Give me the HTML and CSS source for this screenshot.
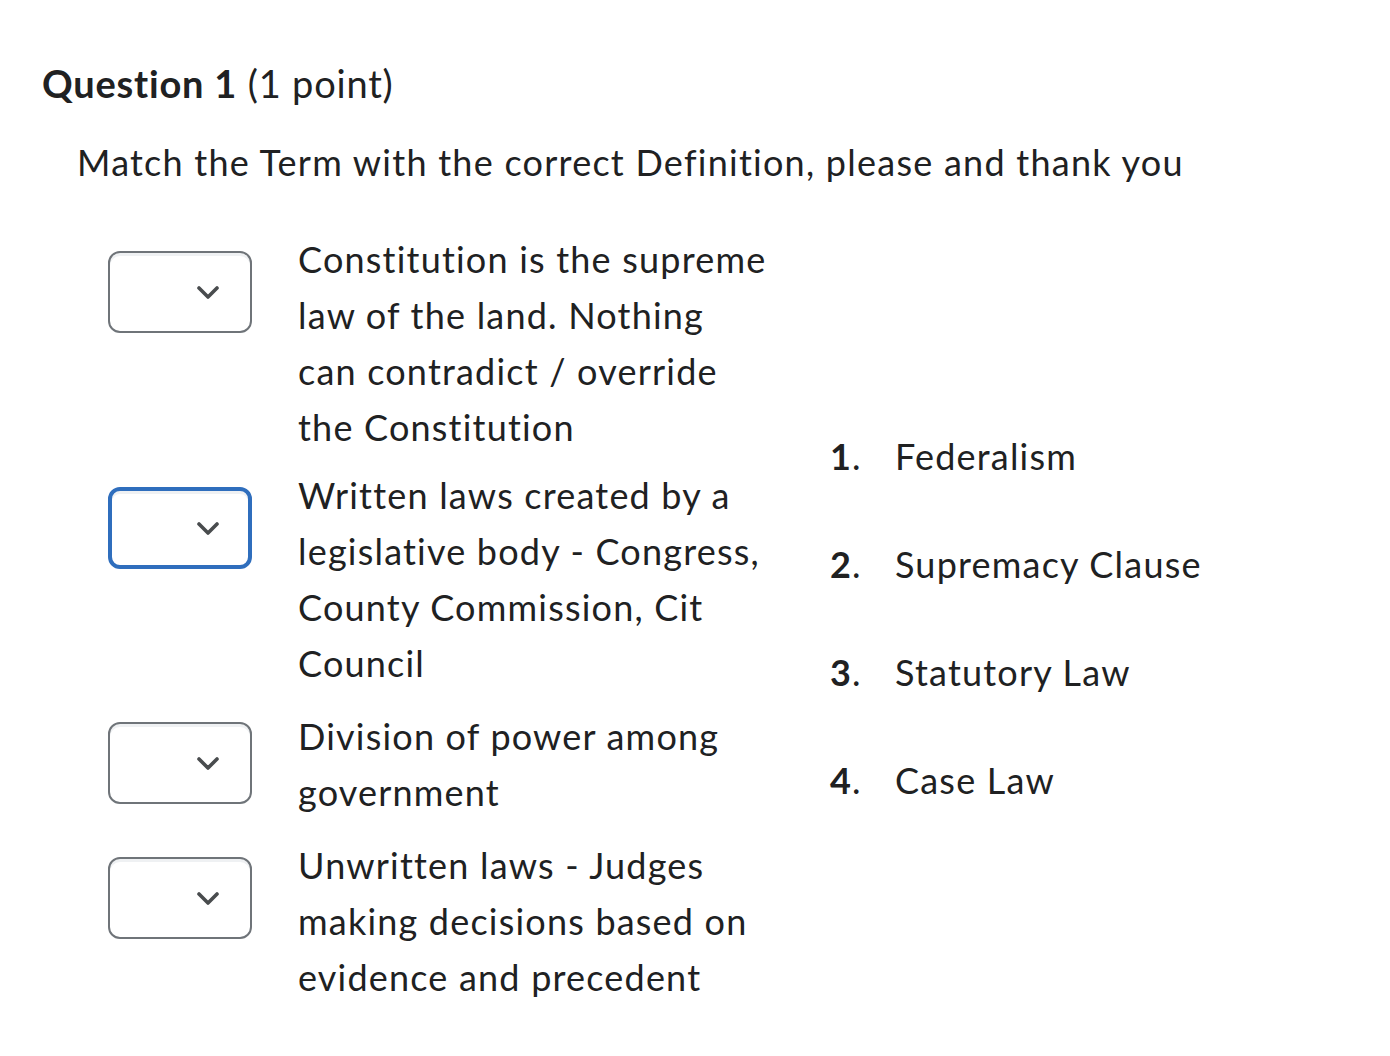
FILE: index.html
```html
<!DOCTYPE html>
<html lang="en">

<head>
    <meta charset="UTF-8">
    <meta name="viewport" content="width=device-width, initial-scale=1.0">
    <title>Question 1</title>
    <link rel="stylesheet" href="styles.css">
</head>

<body>

    <div class="question">
        <h2 class="question-title"><strong>Question 1</strong> (1 point)</h2>
        <p class="question-text">Match the Term with the correct Definition, please and thank you</p>

        <div class="match">
            <div class="definitions">
                <div class="def-row">
                    <div class="dropdown">
                        <svg class="chevron" width="22" height="13" viewBox="0 0 22 13"><path d="M2 2l9 9 9-9" fill="none" stroke="#494c4e" stroke-width="3.6" stroke-linecap="round" stroke-linejoin="round"/></svg>
                    </div>
                    <div class="def-text">Constitution is the supreme law of the land. Nothing can contradict / override the Constitution</div>
                </div>
                <div class="def-row">
                    <div class="dropdown focused">
                        <svg class="chevron" width="22" height="13" viewBox="0 0 22 13"><path d="M2 2l9 9 9-9" fill="none" stroke="#494c4e" stroke-width="3.6" stroke-linecap="round" stroke-linejoin="round"/></svg>
                    </div>
                    <div class="def-text">Written laws created by a legislative body - Congress, County Commission, Cit Council</div>
                </div>
                <div class="def-row short">
                    <div class="dropdown">
                        <svg class="chevron" width="22" height="13" viewBox="0 0 22 13"><path d="M2 2l9 9 9-9" fill="none" stroke="#494c4e" stroke-width="3.6" stroke-linecap="round" stroke-linejoin="round"/></svg>
                    </div>
                    <div class="def-text">Division of power among government</div>
                </div>
                <div class="def-row">
                    <div class="dropdown">
                        <svg class="chevron" width="22" height="13" viewBox="0 0 22 13"><path d="M2 2l9 9 9-9" fill="none" stroke="#494c4e" stroke-width="3.6" stroke-linecap="round" stroke-linejoin="round"/></svg>
                    </div>
                    <div class="def-text">Unwritten laws - Judges making decisions based on evidence and precedent</div>
                </div>
            </div>

            <ol class="terms">
                <li><span class="num"><b>1</b>.</span>Federalism</li>
                <li><span class="num"><b>2</b>.</span>Supremacy Clause</li>
                <li><span class="num"><b>3</b>.</span>Statutory Law</li>
                <li><span class="num"><b>4</b>.</span>Case Law</li>
            </ol>
        </div>
    </div>

</body>

</html>
```

FILE: styles.css
```css
/* Basic styling */
body {
    font-family: 'Lato', 'Noto Sans', sans-serif;
    font-variant-ligatures: none;
    background-color: #fff;
    color: #202122;
    margin: 0;
    padding: 0;
}

.question {
    padding: 60px 0 0 42px;
}

.question-title {
    font-size: 38px;
    font-weight: normal;
    line-height: 46px;
    letter-spacing: 0.8px;
    margin: 0;
}

.question-title strong {
    font-weight: bold;
}

.question-text {
    font-size: 36px;
    line-height: 56px;
    letter-spacing: 1.25px;
    margin: 28px 0 0 35px;
}

.match {
    display: flex;
    align-items: center;
    margin-top: 41px;
    margin-left: 66px;
}

.definitions {
    width: 722px;
}

.def-row {
    display: flex;
    align-items: flex-start;
    margin-bottom: 17px;
}

.def-row:first-child {
    margin-bottom: 12px;
}

.def-row:last-child {
    margin-bottom: 0;
}

.dropdown {
    box-sizing: border-box;
    width: 144px;
    height: 82px;
    margin-top: 20px;
    flex-shrink: 0;
    border: 2px solid #6f7479;
    border-radius: 12px;
    background-color: #fff;
    box-shadow: inset 0 3px 0 #eff1f3;
    display: flex;
    align-items: center;
    justify-content: flex-end;
    padding-right: 31px;
}

.def-row.short .dropdown {
    margin-top: 14px;
}

.dropdown.focused {
    border: 4px solid #2f6ebd;
    padding-right: 29px;
}

.chevron {
    display: block;
}

.def-text {
    font-size: 36px;
    line-height: 56px;
    letter-spacing: 1.2px;
    width: 470px;
    margin-left: 46px;
}

.terms {
    list-style: none;
    margin: 0;
    padding: 0;
    font-size: 36px;
    line-height: 56px;
    letter-spacing: 1.2px;
}

.terms li {
    display: flex;
    margin-bottom: 52px;
}

.terms li:last-child {
    margin-bottom: 0;
}

.num {
    width: 65px;
    flex-shrink: 0;
}
```
